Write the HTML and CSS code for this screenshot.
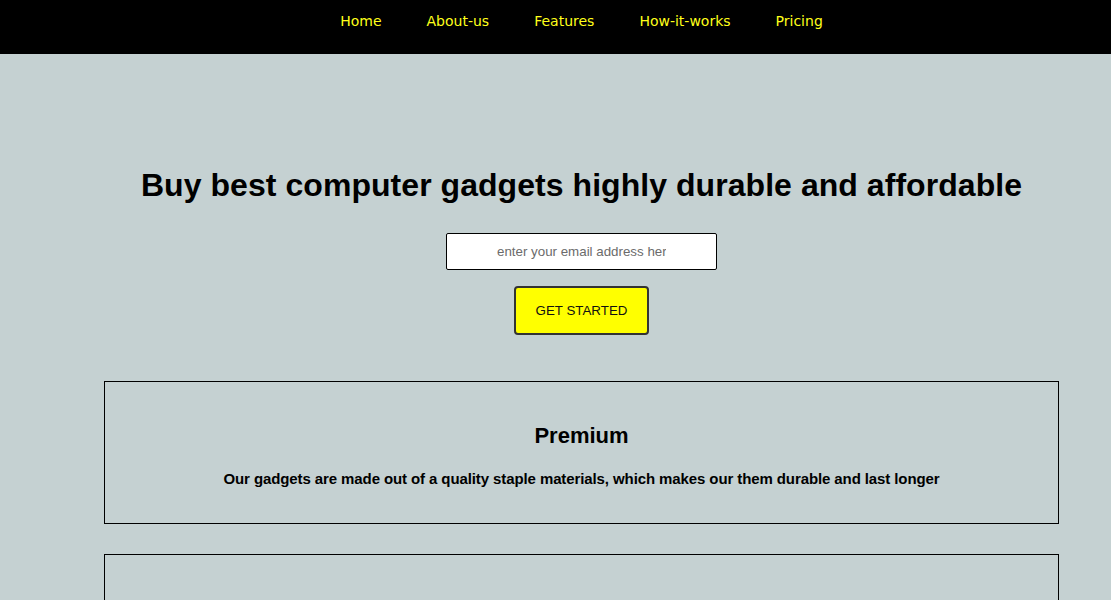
FILE: index.html
```html
<!DOCTYPE html>
<html>
<head>
<meta charset="utf-8">
<title>Gadgets</title>
<link rel="stylesheet" href="styles.css">
</head>
<body>
<header class="header">
  <nav class="nav">
    <a class="nav-link" href="#">Home</a>
    <a class="nav-link" href="#">About-us</a>
    <a class="nav-link" href="#">Features</a>
    <a class="nav-link" href="#">How-it-works</a>
    <a class="nav-link" href="#">Pricing</a>
  </nav>
</header>
<main class="main">
  <section class="hero">
    <h1 class="hero-title">Buy best computer gadgets highly durable and affordable</h1>
    <form class="signup">
      <input class="email" type="email" placeholder="enter your email address here">
      <button class="cta" type="button">GET STARTED</button>
    </form>
  </section>
  <section class="feature">
    <h2 class="feature-title">Premium</h2>
    <p class="feature-text">Our gadgets are made out of a quality staple materials, which makes our them durable and last longer</p>
  </section>
  <section class="feature feature-empty"></section>
</main>
</body>
</html>
```
FILE: styles.css
```css
html, body {
  margin: 0;
  padding: 0;
}
body {
  background: #c5d1d2;
  font-family: "Liberation Sans", Arial, sans-serif;
  color: #000;
}
.header {
  background: #000;
  height: 54px;
  padding-left: 52px;
}
.nav {
  display: flex;
  justify-content: center;
  gap: 45px;
  padding-top: 12px;
}
.nav-link {
  color: #ffff1a;
  text-decoration: none;
  font-family: "DejaVu Sans", Verdana, sans-serif;
  font-size: 14px;
  line-height: 18px;
}
.main {
  padding-left: 52px;
}
.hero {
  display: flex;
  flex-direction: column;
  align-items: center;
  padding-top: 110px;
}
.hero-title {
  margin: 0;
  font-family: "Liberation Sans", Arial, sans-serif;
  font-weight: bold;
  font-size: 32px;
  line-height: 42px;
  letter-spacing: 0.05px;
}
.signup {
  display: flex;
  flex-direction: column;
  align-items: center;
  margin-top: 27px;
}
.email {
  box-sizing: border-box;
  width: 271px;
  height: 37px;
  border: 1px solid #000;
  border-radius: 2px;
  background: #fff;
  text-align: center;
  font-family: "Liberation Sans", Arial, sans-serif;
  font-size: 13.333px;
  padding: 0 50px;
}
.email::placeholder {
  color: #6b6b6b;
}
.cta {
  box-sizing: border-box;
  margin-top: 16px;
  width: 135px;
  height: 49px;
  background: #ffff00;
  border: 2px solid #333;
  border-radius: 4px;
  font-family: "Liberation Sans", Arial, sans-serif;
  font-size: 13.333px;
  color: #111;
}
.feature {
  box-sizing: content-box;
  width: 953px;
  height: 141px;
  margin: 46px auto 0;
  border: 1px solid #000;
  text-align: center;
  padding: 0;
}
.feature + .feature {
  margin-top: 30px;
}
.feature-title {
  margin: 40px 0 0;
  font-family: "Liberation Sans", Arial, sans-serif;
  font-weight: bold;
  font-size: 22px;
  line-height: 28px;
}
.feature-text {
  margin: 20px 0 0;
  font-family: "Liberation Sans", Arial, sans-serif;
  font-weight: bold;
  font-size: 15px;
  line-height: 18px;
  letter-spacing: -0.1px;
}
```
